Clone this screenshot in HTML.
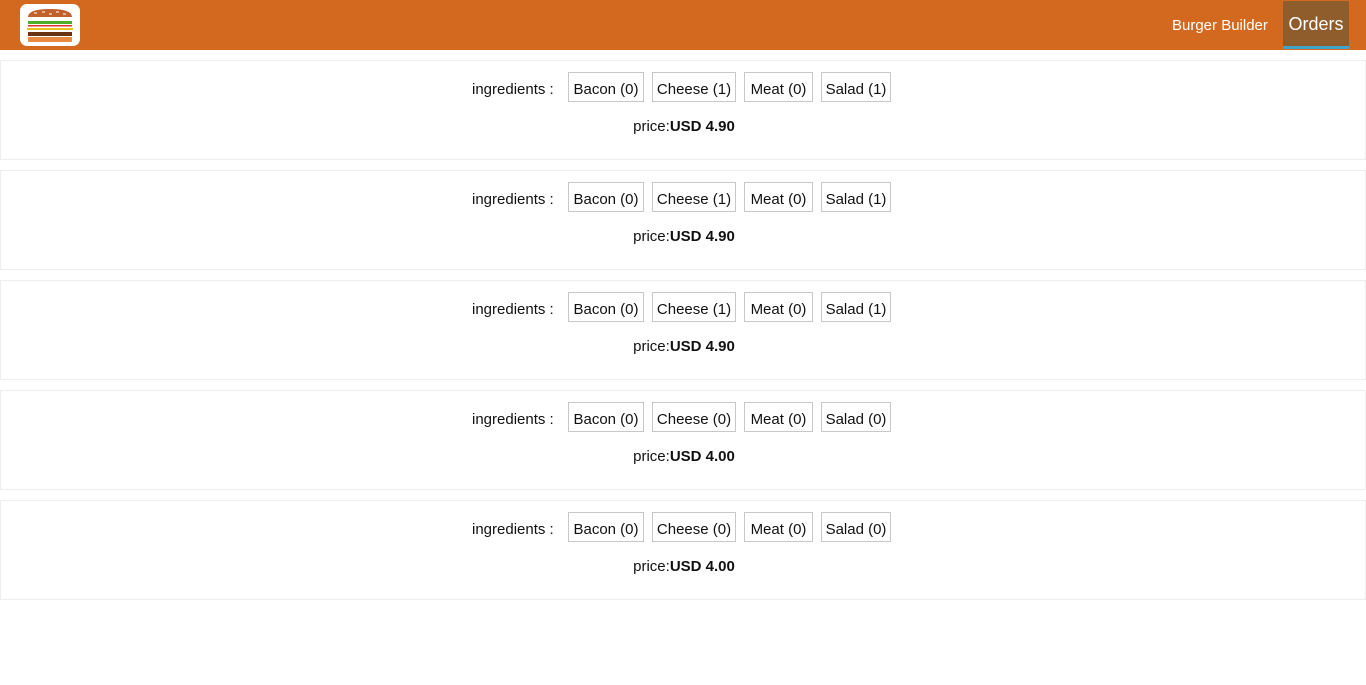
<!DOCTYPE html>
<html><head><meta charset="utf-8"><style>
body{margin:0;font-family:"Liberation Sans",sans-serif;background:#fff;color:#111;}
.top{position:absolute;left:0;top:0;width:1366px;height:50px;background:#d2691e;}
.logo{position:absolute;left:20px;top:4px;width:60px;height:42px;background:#fff;border-radius:7px;}
.bb{position:absolute;left:1172px;top:17px;color:#fff;font-size:15px;}
.ord{position:absolute;left:1283px;top:1px;width:66px;height:45px;background:#8f5c2c;border-bottom:3px solid #40a4c8;color:#fff;font-size:18px;text-align:center;line-height:46px;box-sizing:content-box}
.card{position:absolute;left:0;width:1364px;height:98px;border:1px solid #eee;}
.ing{position:absolute;top:20px;font-size:15px;left:471px;line-height:17px}
.box{position:absolute;top:11px;height:30px;border:1px solid #c8c8c8;box-sizing:border-box;font-size:15px;line-height:33px;text-align:center;}
.price{position:absolute;top:57px;left:0;width:1366px;text-align:center;font-size:15px;}
</style></head><body>
<div class="top">
<div class="logo"><svg width="60" height="42" viewBox="0 0 60 42">
<path d="M8 13 Q8 5 30 5 Q52 5 52 13 Z" fill="#c0602a"/>
<path d="M14 9h3M22 8h3M29 10h3M36 8h3M43 10h3" stroke="#fff" stroke-width="1"/>
<rect x="8" y="17" width="44" height="3" fill="#4caf2a"/>
<rect x="8" y="21" width="44" height="1.5" fill="#d33"/>
<rect x="7" y="24" width="46" height="2" fill="#e8c020"/>
<rect x="8" y="28" width="44" height="4" fill="#6b3410"/>
<rect x="8" y="33" width="44" height="5" rx="1" fill="#e88a40"/>
</svg></div>
<div class="bb">Burger Builder</div>
<div class="ord">Orders</div>
</div>

<div class="card" style="top:60px"><span class="ing">ingredients :</span><div class="box" style="left:567px;width:76px">Bacon (0)</div><div class="box" style="left:651px;width:84px">Cheese (1)</div><div class="box" style="left:743px;width:69px">Meat (0)</div><div class="box" style="left:820px;width:70px">Salad (1)</div><div class="price">price:<b>USD 4.90</b></div></div>
<div class="card" style="top:170px"><span class="ing">ingredients :</span><div class="box" style="left:567px;width:76px">Bacon (0)</div><div class="box" style="left:651px;width:84px">Cheese (1)</div><div class="box" style="left:743px;width:69px">Meat (0)</div><div class="box" style="left:820px;width:70px">Salad (1)</div><div class="price">price:<b>USD 4.90</b></div></div>
<div class="card" style="top:280px"><span class="ing">ingredients :</span><div class="box" style="left:567px;width:76px">Bacon (0)</div><div class="box" style="left:651px;width:84px">Cheese (1)</div><div class="box" style="left:743px;width:69px">Meat (0)</div><div class="box" style="left:820px;width:70px">Salad (1)</div><div class="price">price:<b>USD 4.90</b></div></div>
<div class="card" style="top:390px"><span class="ing">ingredients :</span><div class="box" style="left:567px;width:76px">Bacon (0)</div><div class="box" style="left:651px;width:84px">Cheese (0)</div><div class="box" style="left:743px;width:69px">Meat (0)</div><div class="box" style="left:820px;width:70px">Salad (0)</div><div class="price">price:<b>USD 4.00</b></div></div>
<div class="card" style="top:500px"><span class="ing">ingredients :</span><div class="box" style="left:567px;width:76px">Bacon (0)</div><div class="box" style="left:651px;width:84px">Cheese (0)</div><div class="box" style="left:743px;width:69px">Meat (0)</div><div class="box" style="left:820px;width:70px">Salad (0)</div><div class="price">price:<b>USD 4.00</b></div></div>
</body></html>
